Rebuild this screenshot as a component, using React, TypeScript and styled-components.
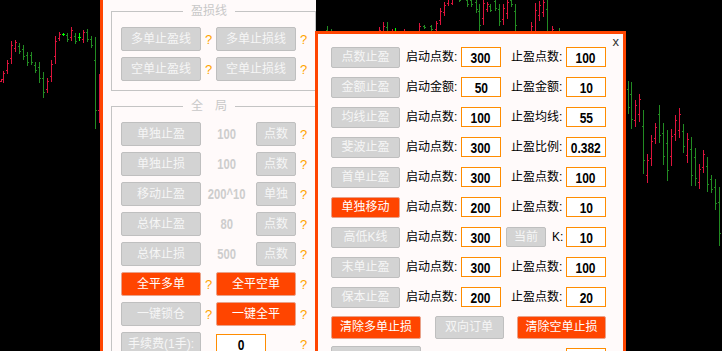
import styled, { createGlobalStyle } from 'styled-components';

const GlobalStyle = createGlobalStyle`
  html, body {
    margin: 0;
    padding: 0;
    background: #000;
    overflow: hidden;
  }
  body {
    width: 722px;
    height: 351px;
    font-family: 'Liberation Sans', 'Noto Sans CJK SC', sans-serif;
  }
`;

const UI_FONT = `'Liberation Sans', 'Noto Sans CJK SC', sans-serif`;
const NUM_FONT = `'Liberation Sans', Arial, sans-serif`;

const SDesk = styled.div`
  position: relative;
  width: 722px;
  height: 351px;
  overflow: hidden;
  background: #000;
`;

const SChart = styled.svg`
  position: absolute;
  left: 0;
  top: 0;
  display: block;
`;

const SLeftWin = styled.div`
  position: absolute;
  left: 100px;
  top: 0;
  width: 216px;
  height: 351px;
  box-sizing: border-box;
  border-left: 3px solid #ff4500;
  background: #fffafa;
  padding: 3px 0 0 8px;
  overflow: hidden;
`;

const SGroup = styled.fieldset`
  width: 205px;
  min-width: 0;
  box-sizing: border-box;
  margin: 0 0 7px;
  padding: 8px 0 9px 9px;
  border: 1px solid #c4c4c4;
`;

const SGroupTitle = styled.legend`
  margin-left: 62px;
  padding: 0 8px;
  font: 12px/16px ${UI_FONT};
  color: #c8c8c8;
`;

const SStack = styled.div<{ $gap: number }>`
  display: flex;
  flex-direction: column;
  gap: ${({ $gap }) => $gap}px;
`;

const SRow = styled.div`
  display: flex;
  align-items: center;
  height: 24px;
`;

const SBtn = styled.button<{ $w: number; $h?: number; $hot?: boolean }>`
  width: ${({ $w }) => $w}px;
  height: ${({ $h }) => $h ?? 24}px;
  flex: none;
  box-sizing: border-box;
  margin: 0;
  padding: 0;
  border: 1px solid ${({ $hot }) => ($hot ? '#e9a28a' : '#bfbfbf')};
  border-radius: 2px;
  background: ${({ $hot }) => ($hot ? '#ff4500' : '#d3d3d3')};
  color: ${({ $hot }) => ($hot ? '#ffffff' : '#f6f6f6')};
  font: 12px/1 ${UI_FONT};
  white-space: nowrap;
  cursor: pointer;
`;

const SHelp = styled.span`
  width: 15px;
  flex: none;
  text-align: center;
  color: #ffa500;
  font: 13px/1 ${UI_FONT};
`;

const SGap = styled.span`
  width: 15px;
  flex: none;
`;

/* narrow bold digits, as the terminal draws them */
const SNum = styled.span<{ $size: number }>`
  display: inline-block;
  font: bold ${({ $size }) => $size}px/1 ${NUM_FONT};
  transform: scaleX(0.8);
  white-space: nowrap;
`;

const SValue = styled.span`
  width: 55px;
  flex: none;
  box-sizing: border-box;
  padding-right: 4px;
  display: flex;
  justify-content: center;
  color: #cdcdcd;
`;

const SField = styled.div<{ $w: number }>`
  width: ${({ $w }) => $w}px;
  height: 20px;
  flex: none;
  box-sizing: border-box;
  display: flex;
  align-items: center;
  justify-content: center;
  border: 1px solid #ff8c00;
  background: #fff;
  color: #000;
  overflow: hidden;
`;

const SRightWin = styled.div`
  position: absolute;
  left: 315px;
  top: 31px;
  width: 311px;
  height: 340px;
  box-sizing: border-box;
  border: 3px solid #ff4500;
  border-bottom: none;
  background: #fffafa;
  padding: 12px 0 0 13px;
`;

const SClose = styled.span`
  position: absolute;
  top: 1px;
  right: 4px;
  color: #333;
  font: 13px/13px ${UI_FONT};
  cursor: pointer;
`;

const SCtrlRow = styled.div`
  display: grid;
  grid-template-columns: 69px 61px 40px 65px 40px;
  align-items: center;
  height: 22px;
`;

const SLabel = styled.span<{ $pad: number }>`
  display: flex;
  align-items: center;
  padding-left: ${({ $pad }) => $pad}px;
  color: #000;
  font: 12px/1 ${UI_FONT};
  white-space: nowrap;
`;

const SKey = styled.span`
  margin-left: 6px;
`;

const SActionRow = styled.div`
  display: flex;
  justify-content: space-between;
  align-items: center;
  width: 275px;
  height: 22px;
`;

const STailRow = styled.div`
  display: grid;
  grid-template-columns: 90px 145px 40px;
  align-items: center;
  height: 22px;
`;

type Tone = 'r' | 'g' | 'l';
type Bar = [number, number, number, Tone];

const BAR_COLOR: Record<Tone, string> = { r: '#dc143c', g: '#228b22', l: '#00ff00' };

const bars: Bar[] = [
  [1, 79, 81, 'r'], [3, 71, 82, 'r'], [7, 60, 73, 'r'], [11, 41, 63, 'r'], [15, 40, 51, 'r'],
  [19, 43, 53, 'g'], [23, 45, 59, 'g'], [27, 52, 65, 'g'], [31, 52, 64, 'g'], [35, 62, 72, 'g'],
  [39, 62, 82, 'g'], [43, 72, 97, 'g'], [47, 78, 92, 'r'], [51, 60, 81, 'r'], [55, 36, 63, 'r'],
  [59, 32, 40, 'r'], [63, 33, 35, 'l'], [67, 33, 41, 'g'], [71, 27, 40, 'r'], [75, 33, 43, 'g'],
  [79, 33, 40, 'l'], [83, 30, 42, 'r'], [87, 29, 41, 'g'], [91, 36, 47, 'g'], [95, 37, 128, 'g'],
  [99, 74, 122, 'r'],
  [327, 26, 40, 'g'], [331, 29, 40, 'g'], [379, 27, 40, 'r'], [383, 22, 40, 'r'], [387, 22, 40, 'g'],
  [392, 29, 40, 'r'], [395, 28, 40, 'l'], [404, 29, 40, 'r'], [419, 23, 40, 'r'], [424, 25, 28, 'g'],
  [431, 25, 30, 'g'], [436, 21, 31, 'r'], [440, 8, 24, 'r'], [444, 2, 15, 'r'], [448, -2, 5, 'r'],
  [452, -2, 4, 'r'], [459, -2, 1, 'g'], [467, -2, 6, 'g'], [471, -2, 6, 'g'], [476, -2, 12, 'g'],
  [479, 4, 30, 'g'], [483, -2, 24, 'r'], [487, 2, 11, 'r'], [490, 4, 11, 'g'], [495, -2, 10, 'g'],
  [499, 4, 25, 'g'], [503, 4, 24, 'r'], [507, -2, 18, 'r'], [511, -2, 6, 'g'], [515, 4, 30, 'g'],
  [531, 22, 40, 'r'], [535, 3, 40, 'r'], [539, 1, 20, 'r'], [543, -2, 16, 'r'], [547, -2, 40, 'g'],
  [552, 26, 40, 'r'], [559, 28, 40, 'g'],
  [628, 81, 113, 'g'], [631, 82, 128, 'g'], [635, 100, 126, 'r'], [639, 94, 121, 'r'], [643, 110, 173, 'g'],
  [647, 154, 182, 'r'], [651, 135, 165, 'r'], [655, 123, 143, 'r'], [659, 105, 142, 'g'], [663, 123, 164, 'g'],
  [667, 130, 180, 'g'], [671, 129, 165, 'r'], [675, 115, 140, 'r'], [679, 108, 137, 'r'], [683, 124, 152, 'g'],
  [687, 133, 162, 'r'], [691, 137, 185, 'g'], [695, 148, 185, 'g'], [699, 164, 188, 'r'], [703, 150, 172, 'r'],
  [707, 157, 191, 'g'], [711, 175, 192, 'g'], [715, 179, 209, 'g'], [719, 187, 245, 'g'],
];

function PriceChart() {
  return (
    <SChart width={722} height={351} viewBox='0 0 722 351' shapeRendering='crispEdges'>
      {bars.map(([x, hi, lo, tone]) => {
        const span = lo - hi;
        const rising = tone === 'r';
        const open = Math.round(tone === 'l' ? (hi + lo) / 2 : rising ? lo - span * 0.25 : hi + span * 0.25) + 0.5;
        const close = Math.round(tone === 'l' ? (hi + lo) / 2 : rising ? hi + span * 0.2 : lo - span * 0.2) + 0.5;
        return (
          <g key={x} stroke={BAR_COLOR[tone]} strokeWidth={1}>
            <line x1={x + 0.5} y1={hi} x2={x + 0.5} y2={lo + 1} />
            <line x1={x - 1} y1={open} x2={x} y2={open} />
            <line x1={x + 1} y1={close} x2={x + 2} y2={close} />
          </g>
        );
      })}
    </SChart>
  );
}

const lineRows = [
  ['多单止盈线', '多单止损线'],
  ['空单止盈线', '空单止损线'],
];

const globalRows = [
  ['单独止盈', '100', '点数'],
  ['单独止损', '100', '点数'],
  ['移动止盈', '200^10', '单独'],
  ['总体止盈', '80', '点数'],
  ['总体止损', '500', '点数'],
];

type Ctrl = { name: string; hot?: boolean; start: string; startVal: string; stop: string; stopVal: string };

const ctrlRows: Ctrl[] = [
  { name: '点数止盈', start: '启动点数:', startVal: '300', stop: '止盈点数:', stopVal: '100' },
  { name: '金额止盈', start: '启动金额:', startVal: '50', stop: '止盈金额:', stopVal: '10' },
  { name: '均线止盈', start: '启动点数:', startVal: '100', stop: '止盈均线:', stopVal: '55' },
  { name: '斐波止盈', start: '启动点数:', startVal: '300', stop: '止盈比例:', stopVal: '0.382' },
  { name: '首单止盈', start: '启动点数:', startVal: '300', stop: '止盈点数:', stopVal: '100' },
  { name: '单独移动', hot: true, start: '启动点数:', startVal: '200', stop: '止盈点数:', stopVal: '10' },
  { name: '高低K线', start: '启动点数:', startVal: '300', stop: 'K:', stopVal: '10' },
  { name: '末单止盈', start: '启动点数:', startVal: '300', stop: '止盈点数:', stopVal: '100' },
  { name: '保本止盈', start: '启动点数:', startVal: '200', stop: '止盈点数:', stopVal: '20' },
];

function GlobalPanel() {
  return (
    <SLeftWin>
      <SGroup>
        <SGroupTitle>盈损线</SGroupTitle>
        <SStack $gap={6}>
          {lineRows.map(([a, b]) => (
            <SRow key={a}>
              <SBtn $w={80}>{a}</SBtn>
              <SHelp>?</SHelp>
              <SBtn $w={80}>{b}</SBtn>
              <SHelp>?</SHelp>
            </SRow>
          ))}
        </SStack>
      </SGroup>

      <SGroup>
        <SGroupTitle>全　局</SGroupTitle>
        <SStack $gap={6}>
          {globalRows.map(([name, val, unit]) => (
            <SRow key={name}>
              <SBtn $w={80}>{name}</SBtn>
              <SValue>
                <SNum $size={14}>{val}</SNum>
              </SValue>
              <SBtn $w={40}>{unit}</SBtn>
              <SHelp>?</SHelp>
            </SRow>
          ))}
          <SRow>
            <SBtn $w={80} $hot>全平多单</SBtn>
            <SHelp>?</SHelp>
            <SBtn $w={80} $hot>全平空单</SBtn>
            <SHelp>?</SHelp>
          </SRow>
          <SRow>
            <SBtn $w={80}>一键锁仓</SBtn>
            <SHelp>?</SHelp>
            <SBtn $w={80} $hot>一键全平</SBtn>
            <SHelp>?</SHelp>
          </SRow>
          <SRow>
            <SBtn $w={80}>手续费(1手):</SBtn>
            <SGap />
            <SField $w={50}>
              <SNum $size={15}>0</SNum>
            </SField>
            <SGap />
            <SGap />
            <SHelp>?</SHelp>
          </SRow>
        </SStack>
      </SGroup>
    </SLeftWin>
  );
}

function ProfitPanel() {
  return (
    <SRightWin>
      <SClose>x</SClose>
      <SStack $gap={8}>
        {ctrlRows.map((r) => (
          <SCtrlRow key={r.name}>
            <SBtn $w={69} $h={21} $hot={r.hot}>{r.name}</SBtn>
            <SLabel $pad={6}>{r.start}</SLabel>
            <SField $w={40}>
              <SNum $size={15}>{r.startVal}</SNum>
            </SField>
            {r.stop === 'K:' ? (
              <SLabel $pad={5}>
                <SBtn $w={40} $h={20}>当前</SBtn>
                <SKey>K:</SKey>
              </SLabel>
            ) : (
              <SLabel $pad={10}>{r.stop}</SLabel>
            )}
            <SField $w={40}>
              <SNum $size={15}>{r.stopVal}</SNum>
            </SField>
          </SCtrlRow>
        ))}
        <SActionRow>
          <SBtn $w={90} $h={23} $hot>清除多单止损</SBtn>
          <SBtn $w={69} $h={23}>双向订单</SBtn>
          <SBtn $w={89} $h={23} $hot>清除空单止损</SBtn>
        </SActionRow>
        <STailRow>
          <SBtn $w={90} $h={23} aria-label='more' />
          <span />
          <SField $w={40} />
        </STailRow>
      </SStack>
    </SRightWin>
  );
}

export default function App() {
  return (
    <>
      <GlobalStyle />
      <SDesk>
        <PriceChart />
        <GlobalPanel />
        <ProfitPanel />
      </SDesk>
    </>
  );
}
